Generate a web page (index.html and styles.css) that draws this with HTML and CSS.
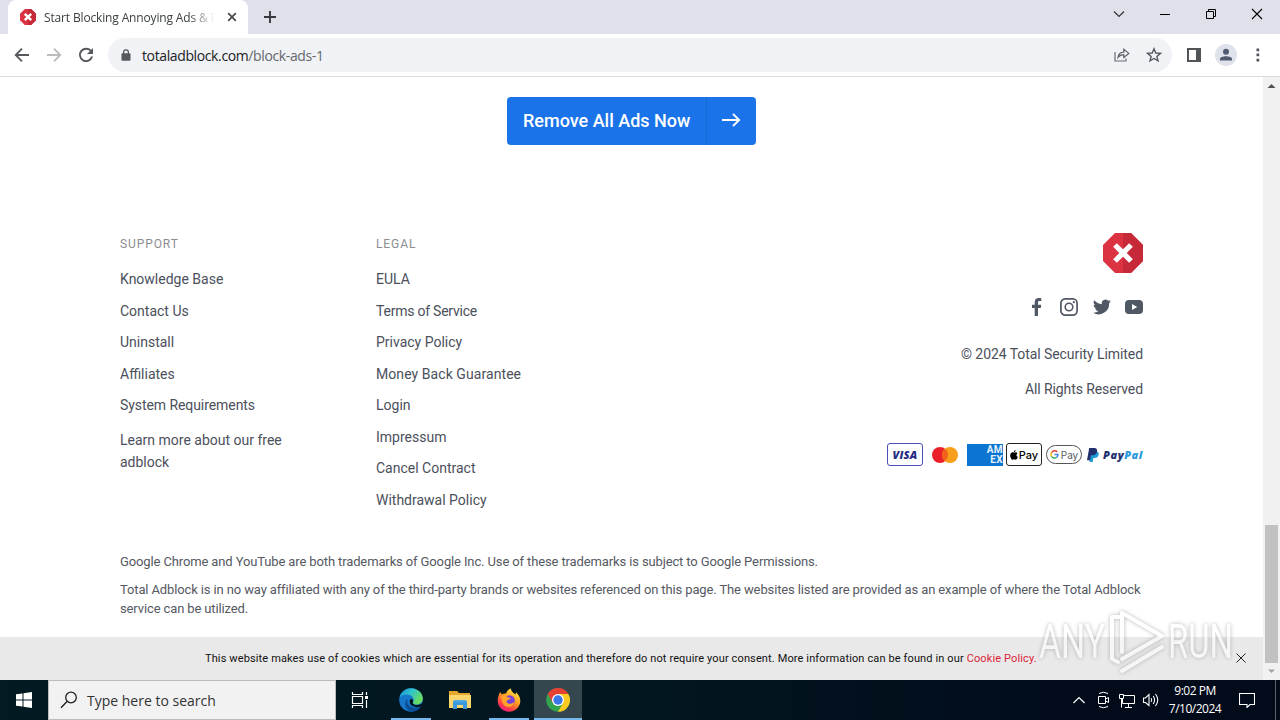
FILE: index.html
```
<!DOCTYPE html>
<html lang="en">
<head>
    <meta charset="UTF-8">
    <meta name="viewport" content="width=device-width, initial-scale=1.0">
    <title>Start Blocking Annoying Ads</title>
    <link rel="stylesheet" href="styles.css">
</head>
<body>
    <!-- tab strip -->
    <div class="tab_strip">
        <div class="tab">
            <svg class="favicon" width="16" height="16" viewBox="0 0 40 40"><path d="M12 0H28L40 12V28L28 40H12L0 28V12Z" fill="#dc3342"/><path d="M20 0H28L40 12V28L28 40H20Z" fill="#c62a39"/><path d="M12 12L28 28M28 12L12 28" stroke="#fff" stroke-width="6"/></svg>
            <span class="tab_title">Start Blocking Annoying Ads &amp; P</span>
            <svg width="10" height="10" viewBox="0 0 10 10"><path d="M1.2 1.2L8.8 8.8M8.8 1.2L1.2 8.8" stroke="#45484d" stroke-width="1.7"/></svg>
        </div>
        <svg class="new_tab" width="12" height="12" viewBox="0 0 12 12"><path d="M6 0V12M0 6H12" stroke="#35383d" stroke-width="1.9"/></svg>
        <div class="window_buttons">
            <svg width="46" height="28" viewBox="0 0 46 28"><path d="M18 11.5L23 16.5L28 11.5" fill="none" stroke="#333" stroke-width="1.2"/></svg>
            <svg width="46" height="28" viewBox="0 0 46 28"><path d="M18 14.5H28" stroke="#000"/></svg>
            <svg width="46" height="28" viewBox="0 0 46 28"><path d="M18.500 11.500H25.500V18.500H18.500ZM20.500 11V9.500H27.500V16.500H26" fill="none" stroke="#000"/></svg>
            <svg width="46" height="28" viewBox="0 0 46 28"><path d="M18 9L28 19M28 9L18 19" stroke="#000" stroke-width="1.1"/></svg>
        </div>
    </div>

    <!-- toolbar -->
    <div class="toolbar">
        <svg width="16" height="16" viewBox="0 0 16 16"><path d="M15 8H2M8 1.700L1.700 8L8 14.300" fill="none" stroke="#55585d" stroke-width="1.800"/></svg>
        <svg width="16" height="16" viewBox="0 0 16 16"><path d="M1 8H14M8 1.700L14.300 8L8 14.300" fill="none" stroke="#b9bbbe" stroke-width="1.800"/></svg>
        <svg width="16" height="16" viewBox="0 0 16 16"><path d="M13.200 4.300A6.200 6.200 0 1 0 14.100 9.600" fill="none" stroke="#55585d" stroke-width="1.900"/><path d="M15 1V7H9Z" fill="#55585d"/></svg>
        <div class="address_bar">
            <svg width="10" height="12" viewBox="0 0 10 12"><path d="M2.600 5V3.300A2.400 2.400 0 0 1 7.400 3.300V5" fill="none" stroke="#55585d" stroke-width="1.300"/><rect x="0.500" y="4.300" width="9" height="7.500" rx="1" fill="#55585d"/></svg>
            <span class="url">totaladblock.com<span class="url_path">/block-ads-1</span></span>
            <svg class="share" width="16" height="14" viewBox="0 0 16 14"><path d="M1 4V13H12V10.500" fill="none" stroke="#6a6d72" stroke-width="1.200"/><path d="M4 9.500C4.500 5.800 6.500 4.300 9.800 4.200V1.200L14.800 5.400L9.800 9.500V6.700C7.200 6.700 5.500 7.600 4 9.500Z" fill="none" stroke="#5f6368" stroke-width="1.200"/></svg>
            <svg width="16" height="16" viewBox="0 0 16 16"><path d="M8 1.800L9.800 6L14.400 6.400L10.900 9.400L12 13.900L8 11.500L4 13.900L5.100 9.400L1.600 6.400L6.200 6Z" fill="none" stroke="#55585d" stroke-width="1.400"/></svg>
        </div>
        <svg class="side_panel" width="14" height="14" viewBox="0 0 14 14"><path d="M0 0H14V14H0ZM2 2V12H9V2Z" fill="#505358" fill-rule="evenodd"/></svg>
        <svg class="profile" width="22" height="22" viewBox="0 0 22 22"><circle cx="11" cy="11" r="11" fill="#dfe2ea"/><circle cx="11" cy="7.800" r="3" fill="#505a70"/><path d="M5 16.500V15C5 11.200 17 11.200 17 15V16.500Z" fill="#505a70"/></svg>
        <svg class="menu_dots" width="4" height="14" viewBox="0 0 4 14"><path d="M0.500 0.500H3.200V3.200H0.500ZM0.500 5.600H3.200V8.300H0.500ZM0.500 10.700H3.200V13.400H0.500Z" fill="#505358"/></svg>
    </div>

    <div class="viewport">
        <div class="page">
            <div class="cta">
                <span class="cta_label">Remove All Ads Now</span>
                <span class="cta_arrow"><svg width="20" height="16" viewBox="0 0 20 16"><path d="M1 8H18M12 2L18.200 8L12 14" fill="none" stroke="#fff" stroke-width="1.800"/></svg></span>
            </div>

            <div class="footer">
                <div class="footer_col">
                    <h4>SUPPORT</h4>
                    <ul>
                        <li>Knowledge Base</li>
                        <li>Contact Us</li>
                        <li>Uninstall</li>
                        <li>Affiliates</li>
                        <li class="tight">System Requirements</li>
                    </ul>
                    <p class="learn_more">Learn more about our free adblock</p>
                </div>
                <div class="footer_col">
                    <h4>LEGAL</h4>
                    <ul>
                        <li>EULA</li>
                        <li class="terms">Terms of Service</li>
                        <li>Privacy Policy</li>
                        <li class="wide">Money Back Guarantee</li>
                        <li>Login</li>
                        <li>Impressum</li>
                        <li>Cancel Contract</li>
                        <li>Withdrawal Policy</li>
                    </ul>
                </div>
                <div class="footer_brand">
                    <svg width="40" height="40" viewBox="0 0 40 40"><path d="M12 0H28L40 12V28L28 40H12L0 28V12Z" fill="#dc3342"/><path d="M20 0H28L40 12V28L28 40H20Z" fill="#c62a39"/><path d="M12 12L28 28M28 12L12 28" stroke="#fff" stroke-width="5.300"/></svg>
                    <div class="social">
                        <svg class="facebook" width="10" height="18" viewBox="0 0 10 18"><path d="M2.700 18V10H0V6.800H2.700V4.300C2.700 1.500 4.300 0 6.900 0C8 0 9 0.100 9.300 0.200V3H7.600C6.200 3 6 3.700 6 4.700V6.800H9.200L8.800 10H6V18Z" fill="#505863"/></svg>
                        <svg class="instagram" width="18" height="18" viewBox="0 0 18 18"><rect x="0.900" y="0.900" width="16.200" height="16.200" rx="4.300" fill="none" stroke="#505863" stroke-width="1.700"/><circle cx="9" cy="9" r="3.800" fill="none" stroke="#505863" stroke-width="1.600"/><circle cx="13.800" cy="4.200" r="1.100" fill="#505863"/></svg>
                        <svg width="18" height="16" viewBox="0 0 24 20"><path d="M24 2.400a10 10 0 0 1-2.800.8A5 5 0 0 0 23.300.5a10 10 0 0 1-3.100 1.200 4.900 4.900 0 0 0-8.400 4.500A14 14 0 0 1 1.700 1a4.900 4.900 0 0 0 1.500 6.600 5 5 0 0 1-2.200-.6 4.900 4.900 0 0 0 3.900 4.900 5 5 0 0 1-2.200.1 4.900 4.900 0 0 0 4.600 3.400A10 10 0 0 1 0 17.500 14 14 0 0 0 21.500 5 10 10 0 0 0 24 2.400Z" fill="#505863"/></svg>
                        <svg width="18" height="14" viewBox="0 0 18 14"><rect width="18" height="14" rx="4" fill="#505863"/><path d="M7 4L12.200 7L7 10Z" fill="#fff"/></svg>
                    </div>
                    <p class="copyright">© 2024 Total Security Limited</p>
                    <p class="rights">All Rights Reserved</p>
                    <div class="payments">
                        <span class="card visa">VISA</span>
                        <svg width="28" height="18" viewBox="0 0 28 18"><circle cx="9" cy="9" r="8" fill="#e9202a"/><circle cx="19" cy="9" r="8" fill="#f79e1b"/><path d="M14 2.800A8 8 0 0 1 14 15.200A8 8 0 0 1 14 2.800Z" fill="#f2601c"/></svg>
                        <span class="amex"><span>AM</span><span>EX</span></span>
                        <span class="card apple_pay"><svg width="8" height="10" viewBox="0 0 8 10"><path d="M5.600 0C5.700 1.200 4.900 2.200 3.800 2.200C3.700 1.200 4.600 0.200 5.600 0ZM4 2.700C4.500 2.700 5 2.300 5.800 2.300C6.500 2.300 7.200 2.700 7.500 3.200C6 4.200 6.200 6.300 7.800 6.900C7.300 8.300 6.500 9.700 5.600 9.700C5 9.700 4.700 9.300 4.100 9.300C3.400 9.300 3.100 9.700 2.600 9.700C1.400 9.700 0.200 7.300 0.200 5.400C0.200 2.700 2.600 1.800 4 2.700Z"/></svg>Pay</span>
                        <span class="card g_pay"><svg width="9" height="9" viewBox="0 0 18 18" fill="none" stroke-width="3"><path d="M14.500 4A7 7 0 0 0 3 5.500" stroke="#ea4335"/><path d="M3 5.500A7 7 0 0 0 3 12.500" stroke="#fbbc05"/><path d="M3 12.500A7 7 0 0 0 13.500 14.500" stroke="#34a853"/><path d="M13.500 14.500A7 7 0 0 0 16 9H9" stroke="#4285f4"/></svg>Pay</span>
                        <span class="paypal"><svg width="12" height="14" viewBox="0 0 12 14"><path d="M4 3.500H9C11.500 3.500 12.200 5.300 11.500 7.300C10.800 9.400 9.300 10 7.400 10H6.400L5.700 14H2.500Z" fill="#1c9bd7"/><path d="M2.200 0H7.200C9.900 0 10.600 1.900 10 4C9.300 6.600 7.500 7.300 5.300 7.300H4L3.200 12.300H0Z" fill="#213170"/></svg><span class="paypal_text">Pay<span class="pal">Pal</span></span></span>
                    </div>
                </div>
            </div>

            <div class="disclaimer">
                <p class="line_one">Google Chrome and YouTube are both trademarks of Google Inc. Use of these trademarks is subject to Google Permissions.</p>
                <p class="line_two">Total Adblock is in no way affiliated with any of the third-party brands or websites referenced on this page. The websites listed are provided as an example of where the Total Adblock<br>service can be utilized.</p>
            </div>

            <div class="cookie_bar">
                <span class="cookie_text">This website makes use of cookies which are essential for its operation and therefore do not require your consent. More information can be found in our <span class="cookie_link">Cookie Policy.</span></span>
                <svg class="cookie_close" width="10" height="10" viewBox="0 0 10 10"><path d="M0.500 0.500L9.500 9.500M9.500 0.500L0.500 9.500" stroke="#222"/></svg>
            </div>
        </div>
        <div class="scrollbar">
            <svg width="17" height="17" viewBox="0 0 17 17"><path d="M4.500 11L8.500 7L12.500 11Z" fill="#505050"/></svg>
            <div class="thumb"></div>
            <svg width="17" height="17" viewBox="0 0 17 17"><path d="M5 6.500H12L8.500 10Z" fill="#a3a3a3"/></svg>
        </div>
    </div>

    <div class="taskbar">
        <div class="start"><svg width="16" height="16" viewBox="0 0 16 16"><path d="M0 2.300L6.500 1.400V7.500H0ZM7.500 1.200L16 0V7.500H7.500ZM0 8.500H6.500V14.600L0 13.700ZM7.500 8.500H16V16L7.500 14.800Z" fill="#fff"/></svg></div>
        <div class="search">
            <svg width="18" height="18" viewBox="0 0 18 18"><circle cx="11" cy="6.500" r="5.300" fill="none" stroke="#222" stroke-width="1.300"/><path d="M7 10.500L1 16.800" stroke="#222" stroke-width="1.400"/></svg>
            <span>Type here to search</span>
        </div>
        <div class="app"><svg width="18" height="16" viewBox="0 0 18 16"><path d="M1.500 0V2.500H11.500V0M1.500 16V13.500H11.500V16M1.500 4.500H11.500V11.500H1.500ZM15.500 0V3M15.500 8V16" fill="none" stroke="#fff" stroke-width="1.200"/><path d="M14 4H17V7H14Z" fill="#fff"/></svg></div>
        <div class="app open edge"><svg width="24" height="24" viewBox="0 0 24 24">
            <defs>
                <linearGradient id="edge_top" x1="0" y1="0" x2="1" y2="0.500"><stop offset="0" stop-color="#168fd5"/><stop offset="0.500" stop-color="#30c4cc"/><stop offset="1" stop-color="#68dc60"/></linearGradient>
            </defs>
            <circle cx="12" cy="12" r="11.800" fill="#1678cb"/>
            <path d="M0.500 10C1.500 4 6.500 0.200 12 0.200C19 0.200 24 5.500 23.800 10.500C23.600 14.500 20.500 16.500 17.500 16.500C14.500 16.500 13.500 15.300 14 14.200C16.500 10 12 6.500 8 6.500C4 6.500 1.500 8 0.500 10Z" fill="url(#edge_top)"/>
            <path d="M8.500 11C7 17.500 13 21.500 21.500 18.500C18.500 23.500 14 24.500 9.500 22.500C5 19 5.500 12.500 8.500 11Z" fill="#0b4d96"/>
            <path d="M11 11.500C12.500 10 15 11.500 14 14.200C13.500 15.500 14.500 16.800 18 17C23 16.500 23 15 24 14V18C18 20.500 8.500 18.500 11 11.500Z" fill="#021821"/>
        </svg></div>
        <div class="app"><svg width="22" height="20" viewBox="0 0 22 20"><path d="M0 1H8L10 3H21V18H0Z" fill="#e6a72a"/><path d="M0 5H22V18H0Z" fill="#fbd66f"/><path d="M4 11H18V19H14V15H8V19H4Z" fill="#3b99dc"/><path d="M5 10H17V12H5Z" fill="#4eaae5"/></svg></div>
        <div class="app open firefox"><svg width="24" height="24" viewBox="0 0 24 24">
            <defs>
                <linearGradient id="fox" x1="0.800" y1="0" x2="0.200" y2="1"><stop offset="0" stop-color="#fff04a"/><stop offset="0.450" stop-color="#ff9a22"/><stop offset="0.750" stop-color="#ff3f46"/><stop offset="1" stop-color="#e31587"/></linearGradient>
            </defs>
            <path d="M3 4L5 6.500C6 5.500 8 5.300 9 5.700C10 2.500 12 1 14 0.500C14 4 17 5 18.500 6.500L19 4.300C22 7 23.500 10 23.300 13.500C22.800 19.500 18 23.700 12 23.700C5.500 23.700 0.700 18.700 0.700 12.800C0.700 9 2 7 3 4Z" fill="url(#fox)"/>
            <circle cx="12.500" cy="12.500" r="5.300" fill="#7741d8"/>
            <path d="M4.500 8C7 6.500 10 8 11 9.500L14 10C13 12 10 11.500 9.500 13.500C10.500 16.500 15 16.500 16.500 14C17.500 17 14 19.800 10.500 18.800C6 18 4 13 4.500 8Z" fill="#ffa32b"/>
        </svg></div>
        <div class="app open active"><svg width="24" height="24" viewBox="0 0 24 24"><circle cx="12" cy="12" r="11.800" fill="#34a350"/><path d="M12 6H22.300A11.800 11.800 0 0 1 12 23.800L17.200 15Z" fill="#fdcb20"/><path d="M1.800 6A11.800 11.800 0 0 1 22.300 6H12L6.800 15Z" fill="#e74133"/><circle cx="12" cy="12" r="6" fill="#fff"/><circle cx="12" cy="12" r="4.700" fill="#3878e8"/></svg></div>

        <div class="tray">
            <svg width="24" height="20" viewBox="0 0 24 20"><path d="M6.500 13L12 7.500L17.500 13" fill="none" stroke="#fff" stroke-width="1.200"/></svg>
            <svg width="24" height="20" viewBox="0 0 24 20"><path d="M7.500 6.500H14.500V13.500H7.500ZM14.500 9L17.500 7.500V12.500L14.500 11M8 3.500Q12.500 1 17 3.500M8 16.500Q12.500 19 17 16.500" fill="none" stroke="#fff"/></svg>
            <svg width="24" height="20" viewBox="0 0 24 20"><path d="M9 5.500H19.500V13.500H7.500V8.500M13.500 13.500V17M10 17.500H17M4.500 4.500H8.500V8.500H4.500ZM6.500 8.500V17.500" fill="none" stroke="#fff"/></svg>
            <svg width="24" height="20" viewBox="0 0 24 20"><path d="M4.500 8H6.500L10 4.500V15.500L6.500 12.500H4.500ZM12 8Q13.500 10 12 12M14.200 6Q17 10 14.200 14M16.500 4Q21 10 16.500 16" fill="none" stroke="#fff" stroke-width="1.100"/></svg>
            <div class="clock"><span>9:02 PM</span><span>7/10/2024</span></div>
            <svg class="notice" width="16" height="16" viewBox="0 0 16 16"><path d="M0.500 1.500H15.500V12.500H11L8 15.500V12.500H0.500Z" fill="none" stroke="#fff" stroke-width="1.100"/></svg>
            <div class="show_desktop"></div>
        </div>
    </div>

    <svg class="watermark" width="204" height="70" viewBox="0 0 204 70">
        <text x="3" y="53" textLength="66" lengthAdjust="spacingAndGlyphs">ANY</text>
        <text x="132" y="53" textLength="65" lengthAdjust="spacingAndGlyphs">RUN</text>
        <path d="M84 12H76V54L82 57M86 47V8L126 31L86 54M86 66L126 42" class="wm_logo"/>
    </svg>
</body>
</html>
```
FILE: styles.css
```
* {
    box-sizing: border-box;
}
body {
    margin: 0;
    width: 1280px;
    height: 720px;
    overflow: hidden;
    display: flex;
    flex-direction: column;
    position: relative;
    background-color: #fff;
    font-family: Roboto, "Liberation Sans", sans-serif;
}
svg {
    display: block;
    flex-shrink: 0;
}
h4, p, ul {
    margin: 0;
    padding: 0;
}

/* browser */
.tab_strip {
    height: 34px;
    display: flex;
    background-color: #dee1e9;
    padding-left: 8px;
    flex-shrink: 0;
    font-family: "Open Sans", "Noto Sans", sans-serif;
}
.tab {
    width: 240px;
    display: flex;
    align-items: center;
    padding-left: 12px;
    background-color: #fff;
    border-radius: 8px 8px 0 0;
}
.tab_title {
    width: 174px;
    margin: 0 9px 0 8px;
    white-space: nowrap;
    font-size: 12px;
    letter-spacing: -0.15px;
    color: #3c4043;
    -webkit-mask-image: linear-gradient(to right, #000 145px, transparent 171px);
}
.new_tab {
    margin: 11px 0 0 16px;
}
.window_buttons {
    display: flex;
    margin-left: auto;
}
.toolbar {
    height: 43px;
    flex-shrink: 0;
    display: flex;
    align-items: center;
    padding-left: 14px;
    gap: 16px;
    border-bottom: 1px solid #d9dadc;
    font-family: "Open Sans", "Noto Sans", sans-serif;
}
.address_bar {
    width: 1064px;
    height: 34px;
    margin-left: -2px;
    padding: 0 10px 0 13px;
    display: flex;
    align-items: center;
    background-color: #f0f2f5;
    border-radius: 17px;
}
.url {
    margin-left: 11px;
    font-size: 14px;
    letter-spacing: -0.38px;
    color: #202124;
}
.url_path {
    color: #65686d;
}
.share {
    margin: 0 16px 0 auto;
}
.side_panel {
    margin-left: -1px;
}
.profile {
    margin-left: -2px;
}
.menu_dots {
    margin-left: 3px;
}

.viewport {
    height: 603px;
    display: flex;
    flex-shrink: 0;
}
.page {
    width: 1263px;
    display: flex;
    flex-direction: column;
}
.cta {
    width: 249px;
    height: 48px;
    margin: 20px auto 0;
    display: flex;
    background-color: #1a73e8;
    color: #fff;
    border-radius: 4px;
    font-size: 18px;
    font-weight: 500;
}
.cta_label {
    width: 200px;
    padding-left: 16px;
    line-height: 48px;
    white-space: nowrap;
    border-right: 1px solid #1968d2;
}
.cta_arrow {
    flex: 1;
    display: flex;
    align-items: center;
    justify-content: center;
    padding: 0 2px 2px 0;
}
.footer {
    height: 319px;
    margin: 88px 120px 0;
    display: flex;
    color: #4b505b;
    font-size: 14px;
}
.footer_col {
    width: 256px;
}
.footer_col h4 {
    height: 31px;
    padding-top: 3px;
    font-size: 12px;
    line-height: 16px;
    font-weight: 400;
    letter-spacing: 0.9px;
    color: #8b8d91;
}
.footer_col ul {
    list-style: none;
}
.footer_col li {
    height: 31.5px;
    line-height: 31.5px;
}
.footer_col .terms {
    letter-spacing: -0.23px;
}
.footer_col .tight {
    letter-spacing: -0.07px;
}
.footer_col .wide {
    letter-spacing: 0.07px;
}
.learn_more {
    width: 180px;
    line-height: 22px;
    margin-top: 7px;
}
.footer_brand {
    margin-left: auto;
    display: flex;
    flex-direction: column;
    align-items: flex-end;
}
.social {
    display: flex;
    align-items: center;
    margin-top: 25px;
    gap: 14px;
}
.facebook {
    margin-right: 4px;
}
.instagram {
    margin-right: 1px;
}
.copyright {
    margin-top: 27px;
    line-height: 22px;
    letter-spacing: -0.07px;
}
.rights {
    margin-top: 13px;
    line-height: 22px;
    letter-spacing: -0.1px;
}
.payments {
    display: flex;
    align-items: center;
    margin-top: 42px;
    height: 25px;
    width: 256px;
}
.card {
    width: 36px;
    height: 23px;
    display: flex;
    align-items: center;
    justify-content: center;
    border: 1px solid #222;
    border-radius: 3px;
}
.visa {
    border-color: #4a50b5;
    color: #252a85;
    font: italic 800 11px "Open Sans", sans-serif;
    letter-spacing: 0.2px;
    padding-bottom: 1px;
    margin-right: 8px;
}
.amex {
    width: 36px;
    height: 22px;
    margin: 0 3px 0 8px;
    padding-top: 1px;
    display: flex;
    flex-direction: column;
    align-items: flex-end;
    background-color: #0b75d1;
    color: #e4f1fc;
    font-size: 10px;
    line-height: 10px;
    letter-spacing: 0.4px;
    font-weight: 700;
}
.apple_pay {
    color: #000;
    font: 500 11px Inter, sans-serif;
    gap: 1px;
    margin-right: 4px;
}
.g_pay {
    color: #5a5d61;
    font: 400 10px Inter, sans-serif;
    gap: 2px;
    border-radius: 11px;
    height: 19px;
    border-color: #555;
}
.paypal {
    margin-left: 5px;
    display: flex;
    align-items: center;
    gap: 4px;
    color: #213170;
    font: italic 800 11px "Open Sans", sans-serif;
    letter-spacing: 0.55px;
}
.pal {
    color: #2b9ada;
}
.disclaimer {
    margin: 0 120px;
    font-size: 13px;
    line-height: 19px;
    letter-spacing: -0.125px;
    color: #555962;
    white-space: nowrap;
}
.line_two {
    margin-top: 9px;
}
.cookie_bar {
    height: 43px;
    margin-top: auto;
    padding: 0 17px 0 205px;
    display: flex;
    align-items: center;
    justify-content: space-between;
    background-color: #e9e9e9;
    font-size: 11px;
    letter-spacing: 0.126px;
    color: #111;
    white-space: nowrap;
}
.cookie_link {
    color: #dc2439;
}
.cookie_close {
    margin-bottom: 2px;
}
.scrollbar {
    width: 17px;
    display: flex;
    flex-direction: column;
    align-items: center;
    background-color: #f1f1f1;
}
.thumb {
    width: 13px;
    height: 138px;
    margin-top: auto;
    background-color: #c1c1c1;
}

/* windows taskbar */
.taskbar {
    height: 40px;
    display: flex;
    flex-shrink: 0;
    background: linear-gradient(to right, #021a22, #021620 50%, #020b1a 85%);
    font-family: "Open Sans", "Noto Sans", sans-serif;
}
.start {
    width: 48px;
    display: flex;
    align-items: center;
    justify-content: center;
}
.search {
    width: 288px;
    display: flex;
    align-items: center;
    padding-left: 11px;
    gap: 9px;
    background-color: #f2f2f2;
    border: 1px solid #bcbcbc;
    font-size: 14px;
    color: #333;
}
.app {
    width: 48px;
    display: flex;
    align-items: center;
    justify-content: center;
    position: relative;
}
.edge {
    margin: 0 1px 0 3px;
}
.firefox {
    margin: 0 1px;
}
.open::after {
    content: "";
    position: absolute;
    left: 4px;
    right: 4px;
    bottom: 0;
    height: 2px;
    background-color: #76b9ed;
}
.active {
    background-color: #34474f;
}
.active::after {
    left: 0;
    right: 0;
}
.tray {
    margin-left: auto;
    display: flex;
    align-items: center;
    color: #fff;
}
.clock {
    width: 64px;
    display: flex;
    flex-direction: column;
    align-items: center;
    font-size: 12px;
    line-height: 18px;
    letter-spacing: -0.5px;
}
.notice {
    margin: 0 20px 0 12px;
}
.show_desktop {
    width: 5px;
    height: 40px;
    border-left: 1px solid #59616c;
}

.watermark {
    position: absolute;
    left: 1036px;
    top: 605px;
    overflow: visible;
    opacity: 0.6;
    filter: drop-shadow(0 0 2px #888);
}
.watermark text {
    font: 400 48px Roboto, sans-serif;
    fill: #fff;
}
.wm_logo {
    fill: none;
    stroke: #fff;
    stroke-width: 4;
    stroke-linejoin: round;
    stroke-linecap: round;
}
```
